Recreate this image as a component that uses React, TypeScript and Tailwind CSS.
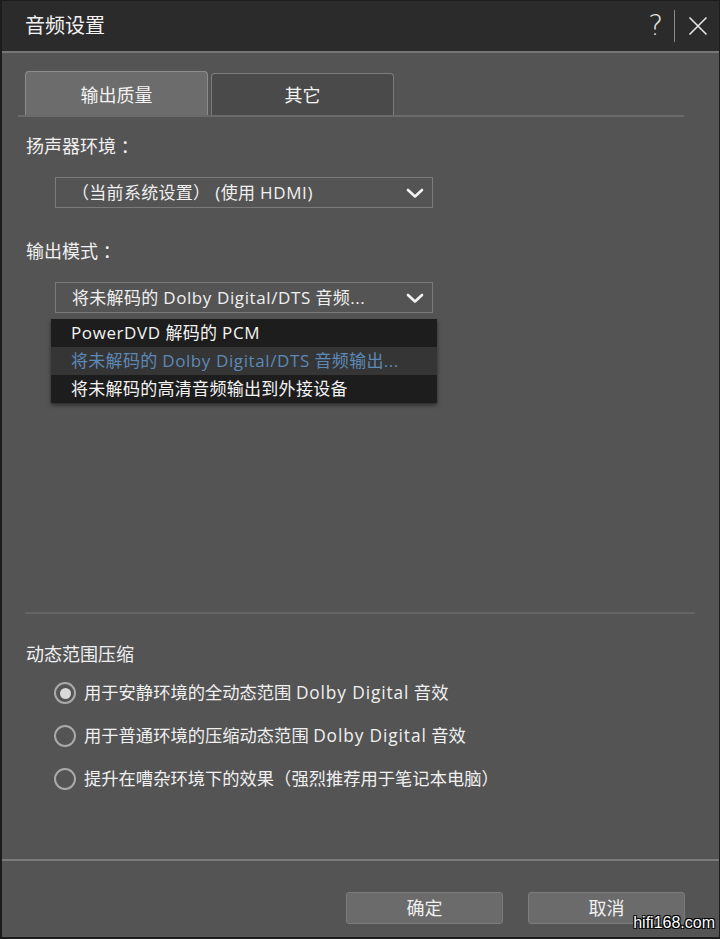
import React from "react";

const FONT = { fontFamily: '"Open Sans", "Noto Sans CJK SC", sans-serif' };

function Chevron() {
  return (
    <svg width="18" height="12" viewBox="0 0 18 12" className="shrink-0">
      <path d="M2 3 L9 9.5 L16 3" fill="none" stroke="#f2f2f2" strokeWidth="2.6" strokeLinecap="round" strokeLinejoin="round" />
    </svg>
  );
}

function Radio({ checked }: { checked?: boolean }) {
  return (
    <div className="w-[22px] h-[22px] rounded-full border-[2px] border-[#a9a9a9] flex items-center justify-center shrink-0">
      {checked && <div className="w-[11px] h-[11px] rounded-full bg-[#d9d9d9]" />}
    </div>
  );
}

function L({ children }: { children: React.ReactNode }) {
  return <span className="tracking-[0.6px]">{children}</span>;
}

function R({ children }: { children: React.ReactNode }) {
  return <span className="tracking-[0.9px]">{children}</span>;
}

export default function App() {
  return (
    <div
      className="w-[720px] h-[939px] bg-[#545454] border border-[#1c1c1c] border-l-[2px] border-b-[2px] flex flex-col text-[#f0f0f0] overflow-hidden relative"
      style={FONT}
    >
      {/* Title bar */}
      <div className="h-[52px] bg-[#2b2b2b] border-b-[2px] border-[#767676] flex items-center pl-[23px] pr-[10px] shrink-0">
        <div className="text-[20px] leading-none text-[#f2f2f2] flex-1">音频设置</div>
        <div className="text-[28px] leading-none text-[#e6e6e6] mr-[11px]" style={{ fontFamily: '"DejaVu Sans", sans-serif', fontWeight: 200 }}>?</div>
        <div className="w-[1px] h-[32px] bg-[#8a8a8a] mr-[13px]" />
        <svg width="20" height="20" viewBox="0 0 20 20" className="mr-[1px]">
          <path d="M1.5 1.5 L18.5 18.5 M18.5 1.5 L1.5 18.5" stroke="#e6e6e6" strokeWidth="1.6" />
        </svg>
      </div>

      {/* Tabs */}
      <div className="mt-[18px] mx-[16px] mr-[35px] flex items-end border-b-[2px] border-[#6a6a6a] shrink-0 pl-[7px]">
        <div className="w-[183px] h-[44px] bg-[#6c6c6c] border border-b-0 border-[#8c8c8c] rounded-t-[4px] flex items-center justify-center pt-[4px] text-[18px] text-[#f4f4f4]">
          输出质量
        </div>
        <div className="ml-[3px] w-[183px] h-[42px] bg-[#4a4a4a] border border-b-0 border-[#7c7c7c] rounded-t-[4px] flex items-center justify-center pt-[2px] text-[18px] text-[#f4f4f4]">
          其它
        </div>
      </div>

      {/* Speaker env */}
      <div className="pl-[24px] mt-[17px] text-[18px] leading-[24px]">扬声器环境 ：</div>
      <div className="ml-[53px] mt-[19px] w-[378px] h-[31px] border border-[#7a7a7a] flex items-center pl-[16px] pr-[8px] text-[17px] tracking-[0.3px]">
        <span className="flex-1">（当前系统设置） <L>(</L>使用 <L>HDMI)</L></span>
        <Chevron />
      </div>

      {/* Output mode */}
      <div className="pl-[24px] mt-[31px] text-[18px] leading-[24px]">输出模式 ：</div>
      <div className="relative ml-[53px] mt-[19px] w-[378px]">
        <div className="h-[31px] border border-[#7a7a7a] flex items-center pl-[16px] pr-[8px] text-[17px] tracking-[0.3px]">
          <span className="flex-1">将未解码的 <L>Dolby Digital/DTS</L> 音频<L>...</L></span>
          <Chevron />
        </div>
        <div className="absolute left-[-4px] top-[37px] w-[386px] bg-[#262626] shadow-[0_2px_4px_rgba(0,0,0,0.5)] flex flex-col text-[17px] tracking-[0.3px]">
          <div className="h-[28px] bg-[#1d1d1d] flex items-center pl-[20px] text-[#f4f4f4]">
            <span><L>PowerDVD</L> 解码的 <L>PCM</L></span>
          </div>
          <div className="h-[28px] bg-[#353535] flex items-center pl-[20px] text-[#5d89b6]">
            <span>将未解码的 <L>Dolby Digital/DTS</L> 音频输出<L>...</L></span>
          </div>
          <div className="h-[28px] bg-[#1d1d1d] flex items-center pl-[20px] text-[#f4f4f4]">
            <span>将未解码的高清音频输出到外接设备</span>
          </div>
        </div>
      </div>

      <div className="flex-1" />

      {/* Divider */}
      <div className="ml-[23px] mr-[24px] h-[2px] bg-[#646464] shrink-0" />

      {/* Dynamic range */}
      <div className="pl-[24px] mt-[28px] text-[18px] leading-[24px]">动态范围压缩</div>
      <div className="flex flex-col mt-[15px] pl-[52px] gap-[19px] text-[17.3px] leading-[24px]">
        <div className="flex items-center gap-[8px]">
          <Radio checked />
          <span>用于安静环境的全动态范围 <R>Dolby Digital</R> 音效</span>
        </div>
        <div className="flex items-center gap-[8px]">
          <Radio />
          <span>用于普通环境的压缩动态范围 <R>Dolby Digital</R> 音效</span>
        </div>
        <div className="flex items-center gap-[8px]">
          <Radio />
          <span>提升在嘈杂环境下的效果（强烈推荐用于笔记本电脑）</span>
        </div>
      </div>

      {/* bottom divider */}
      <div className="mt-[68px] h-[2px] bg-[#7a7a7a] shrink-0" />

      {/* Buttons */}
      <div className="flex justify-end gap-[25px] pr-[34px] mt-[31px] mb-[13px]">
        <div className="w-[157px] h-[32px] bg-[#6b6b6b] border border-[#7c7c7c] rounded-[3px] flex items-center justify-center text-[18px]">确定</div>
        <div className="w-[157px] h-[32px] bg-[#6b6b6b] border border-[#7c7c7c] rounded-[3px] flex items-center justify-center text-[18px]">取消</div>
      </div>

      {/* watermark */}
      <div
        className="absolute right-[4px] bottom-[6px] text-[16px] leading-none text-white"
        style={{ fontFamily: '"Liberation Sans", sans-serif', textShadow: "1px 1px 0 #000, -1px -1px 0 #000, 1px -1px 0 #000, -1px 1px 0 #000" }}
      >
        hifi168.com
      </div>
    </div>
  );
}
